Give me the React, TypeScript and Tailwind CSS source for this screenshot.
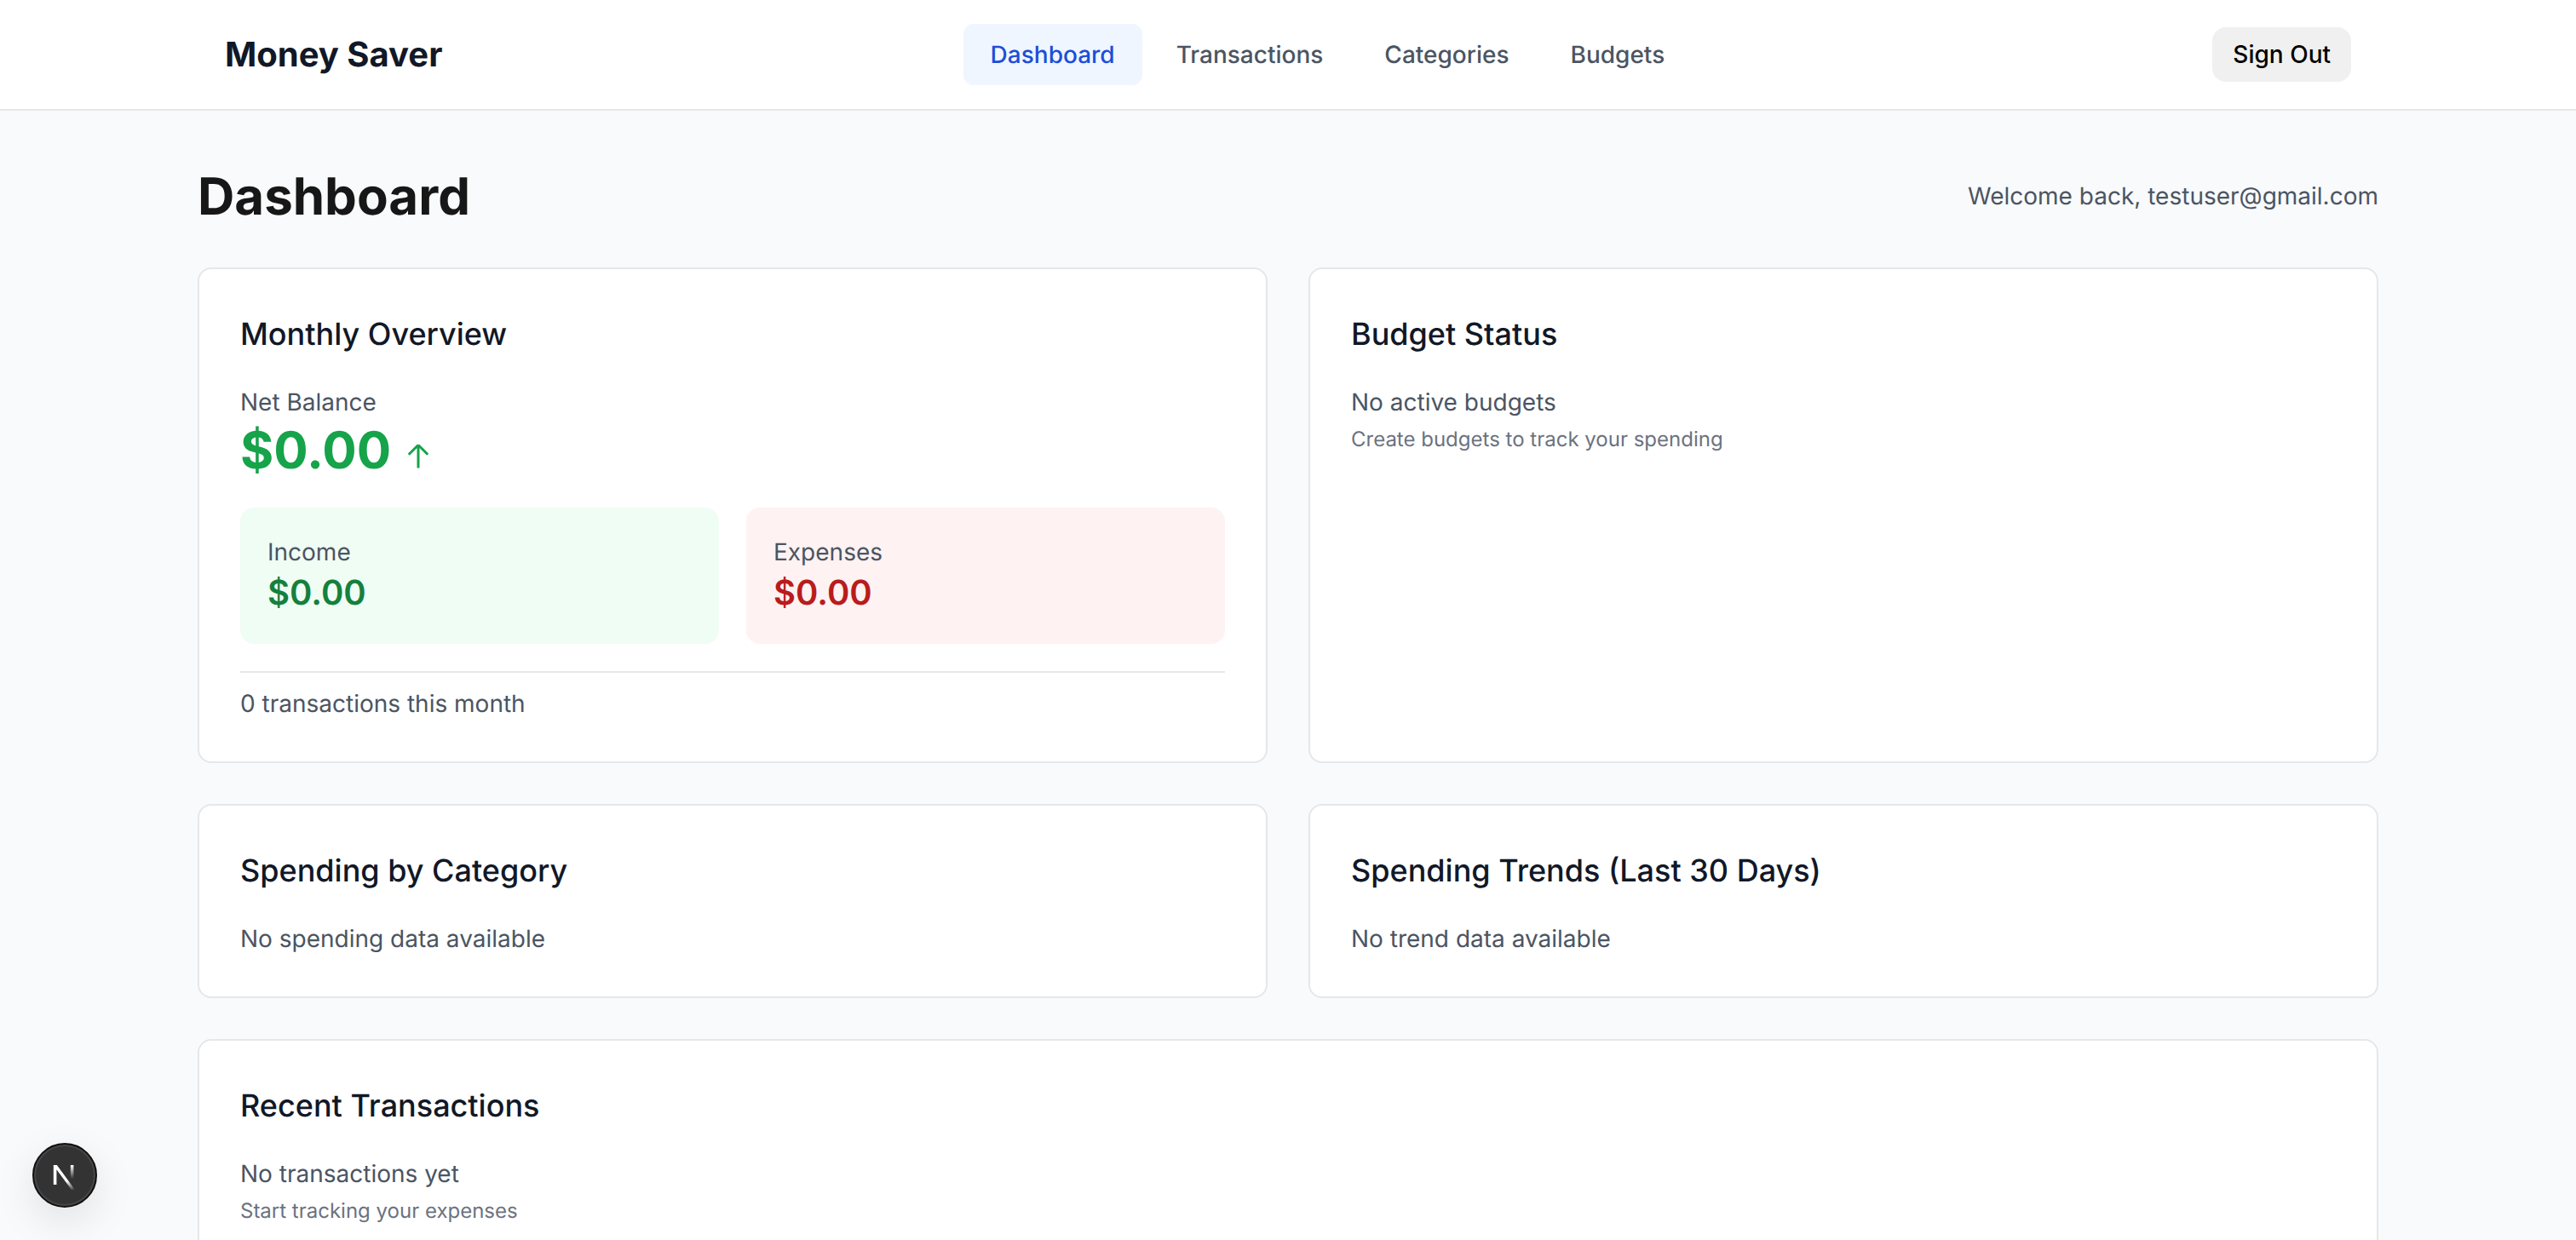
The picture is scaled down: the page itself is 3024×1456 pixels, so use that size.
import type { ReactNode } from "react";

function Card({ title, children, className = "" }: { title: string; children: ReactNode; className?: string }) {
  return (
    <div className={`bg-white border-2 border-[#e5e7eb] rounded-2xl p-12 ${className}`}>
      <h2 className="text-[36px] leading-[56px] font-medium text-[#111827] mb-8">{title}</h2>
      {children}
    </div>
  );
}

function NextBadge() {
  return (
    <div className="fixed left-[38px] bottom-[38px] w-[76px] h-[76px] rounded-full bg-[#333333] border-2 border-[#111111] shadow-[0_16px_48px_rgba(0,0,0,0.1),inset_0_0_0_2px_rgba(255,255,255,0.1)] flex items-center justify-center">
      <svg width="36" height="36" viewBox="0 0 18 18" fill="none">
        <defs>
          <linearGradient id="n1" x1="7" y1="6" x2="15" y2="17.5" gradientUnits="userSpaceOnUse">
            <stop offset="0.5" stopColor="#fff" />
            <stop offset="1" stopColor="#fff" stopOpacity="0" />
          </linearGradient>
          <linearGradient id="n2" x1="13" y1="3" x2="13" y2="11" gradientUnits="userSpaceOnUse">
            <stop stopColor="#fff" />
            <stop offset="1" stopColor="#fff" stopOpacity="0" />
          </linearGradient>
        </defs>
        <path d="M2.4 3H4.4L15 17.5H13L4.2 5.6V14.5H2.4V3Z" fill="url(#n1)" />
        <rect x="12.4" y="3" width="1.8" height="8" fill="url(#n2)" />
      </svg>
    </div>
  );
}

export default function App() {
  return (
    <div className="h-screen overflow-hidden bg-[#f9fafb] font-['Inter',sans-serif] [text-rendering:geometricPrecision]">
      <nav className="bg-white border-b-2 border-[#e5e7eb]">
        <div className="max-w-[2560px] mx-auto px-8 h-32 flex items-center justify-between">
          <span className="text-[40px] leading-[56px] font-bold text-[#111827]">Money Saver</span>
          <div className="flex items-center gap-2">
            <a className="px-8 py-4 rounded-xl text-[28px] leading-10 font-medium bg-[#eff6ff] text-[#1d4ed8]">Dashboard</a>
            <a className="px-8 py-4 rounded-xl text-[28px] leading-10 font-medium text-[#4b5563]">Transactions</a>
            <a className="px-8 py-4 rounded-xl text-[28px] leading-10 font-medium text-[#4b5563]">Categories</a>
            <a className="px-8 py-4 rounded-xl text-[28px] leading-10 font-medium text-[#4b5563]">Budgets</a>
          </div>
          <button className="h-16 px-6 rounded-2xl bg-[#f0f0f0] text-black text-[28px] leading-10 font-medium">Sign Out</button>
        </div>
      </nav>
      <main className="max-w-[2560px] mx-auto pt-16">
        <div className="flex items-center justify-between mb-12">
          <h1 className="pt-[2px] text-[60px] leading-[70px] font-bold text-[#171717]">Dashboard</h1>
          <p className="text-[28px] leading-10 text-[#4b5563]">Welcome back, testuser@gmail.com</p>
        </div>
        <div className="grid grid-cols-2 gap-12">
          <Card title="Monthly Overview">
            <p className="text-[28px] leading-10 text-[#4b5563]">Net Balance</p>
            <div className="flex items-center gap-[14px] mb-8">
              <span className="pt-[2px] text-[60px] leading-[70px] font-bold text-[#16a34a]">$0.00</span>
              <svg className="mt-4 text-[#16a34a]" width="36" height="36" viewBox="0 0 24 24" fill="none" stroke="currentColor" strokeWidth="2">
                <path d="M4.5 10.5 12 3m0 0 7.5 7.5M12 3v18" />
              </svg>
            </div>
            <div className="grid grid-cols-2 gap-8 mb-8">
              <div className="bg-[#f0fdf4] rounded-2xl p-8">
                <p className="text-[28px] leading-10 text-[#4b5563]">Income</p>
                <p className="text-[40px] leading-[56px] font-semibold text-[#15803d]">$0.00</p>
              </div>
              <div className="bg-[#fef2f2] rounded-2xl p-8">
                <p className="text-[28px] leading-10 text-[#4b5563]">Expenses</p>
                <p className="text-[40px] leading-[56px] font-semibold text-[#b91c1c]">$0.00</p>
              </div>
            </div>
            <div className="border-t-2 border-[#e5e7eb] pt-4">
              <p className="text-[28px] leading-10 text-[#4b5563]">0 transactions this month</p>
            </div>
          </Card>
          <Card title="Budget Status">
            <p className="text-[28px] leading-10 text-[#4b5563]">No active budgets</p>
            <p className="text-[24px] leading-8 text-[#6b7280] mt-2">Create budgets to track your spending</p>
          </Card>
          <Card title="Spending by Category">
            <p className="text-[28px] leading-10 text-[#4b5563]">No spending data available</p>
          </Card>
          <Card title="Spending Trends (Last 30 Days)">
            <p className="text-[28px] leading-10 text-[#4b5563]">No trend data available</p>
          </Card>
          <Card title="Recent Transactions" className="col-span-2">
            <p className="text-[28px] leading-10 text-[#4b5563]">No transactions yet</p>
            <p className="text-[24px] leading-8 text-[#6b7280] mt-2">Start tracking your expenses</p>
          </Card>
        </div>
      </main>
      <NextBadge />
    </div>
  );
}
